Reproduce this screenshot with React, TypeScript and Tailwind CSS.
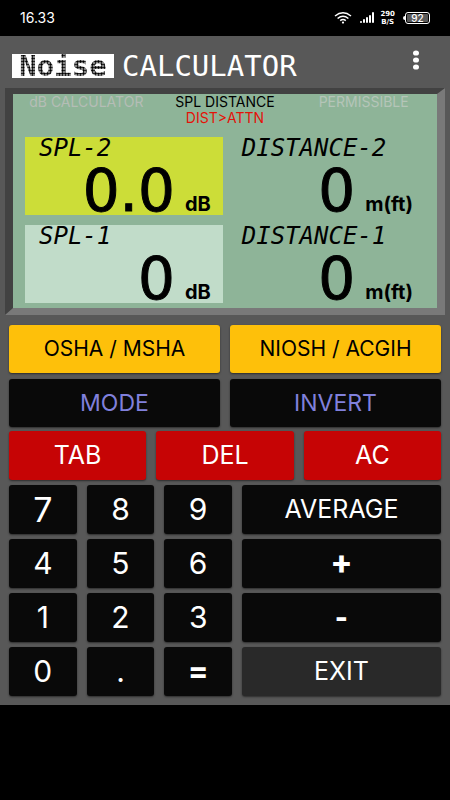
import type { ReactNode } from "react";

function StatusBar() {
  return (
    <div className="flex h-9 items-center justify-between bg-black pl-5 pr-5 text-white">
      <span className="text-sm">16.33</span>
      <div className="flex items-center">
        <svg className="mr-2 h-3 w-[18px]" viewBox="0 0 18 12" fill="none" stroke="currentColor" strokeWidth="1.5">
          <path d="M1 4Q9-2.4 17 4M3.600 6.500Q9 2 14.400 6.500M6.200 8.700Q9 6.400 11.800 8.700" />
          <circle cx="9" cy="10.600" r="1.100" fill="currentColor" stroke="none" />
        </svg>
        <svg className="mr-[6px] h-3 w-[14px]" viewBox="0 0 14 12" fill="currentColor">
          <rect x="0" y="9" width="2" height="2" rx="1" />
          <rect x="3" y="7" width="2" height="4" rx="1" />
          <rect x="6" y="5" width="2" height="6" rx="1" />
          <rect x="9" y="3" width="2" height="8" rx="1" />
          <rect x="12" y="0" width="2" height="11" rx="1" />
        </svg>
        <div className="mr-2 flex flex-col items-center font-['DejaVu_Sans',sans-serif] text-[7px] font-bold leading-[8px]">
          <span>290</span>
          <span>B/S</span>
        </div>
        <div className="flex items-center">
          <span className="h-1 w-[2px] rounded-l bg-white" />
          <div className="flex h-3 w-[25px] items-center justify-center rounded-[3px] border border-white p-px">
            <span className="flex h-full w-full items-center justify-center rounded-[1px] bg-[#5a5a5a] text-[10px] font-medium leading-none">
              92
            </span>
          </div>
        </div>
      </div>
    </div>
  );
}

function Header() {
  return (
    <header className="flex h-[52px] items-start justify-between pl-3 pr-[26px] pt-3">
      <h1 className="flex items-center gap-2 pt-[6px] font-['DejaVu_Sans_Mono',monospace] text-white">
        <span className="flex h-6 w-[102px] items-center justify-center bg-white text-[29px] font-bold leading-6">
          <span className="bg-[radial-gradient(circle,#000_40%,#aaa_75%)] bg-[length:3px_3px] bg-clip-text text-transparent">
            Noise
          </span>
        </span>
        <span className="text-[29px] leading-6">CALCULATOR</span>
      </h1>
      <button aria-label="More options" className="flex h-6 w-4 items-center justify-center">
        <svg className="h-5 w-[6px]" viewBox="0 0 6 20" fill="#fff">
          <ellipse cx="3" cy="3" rx="3" ry="2.600" />
          <ellipse cx="3" cy="10" rx="3" ry="2.600" />
          <ellipse cx="3" cy="17" rx="3" ry="2.600" />
        </svg>
      </button>
    </header>
  );
}

type ReadoutProps = {
  label: string;
  value: string;
  unit: string;
  className: string;
};

function Readout({ label, value, unit, className }: ReadoutProps) {
  return (
    <div className={`flex h-[78px] flex-col ${className}`}>
      <span className="font-['DejaVu_Sans_Mono',monospace] text-2xl italic leading-[22px]">{label}</span>
      <div className="flex items-baseline justify-end gap-[10px]">
        <output className="font-['DejaVu_Sans',sans-serif] text-[58px] leading-[64px] [-webkit-text-stroke:1px_#000]">
          {value}
        </output>
        <span className="text-xl font-bold leading-6">{unit}</span>
      </div>
    </div>
  );
}

function Display() {
  return (
    <section className="mx-[5px] border-b-[7px] border-l-8 border-r-8 border-t-[6px] border-b-[#797979] border-l-[#424242] border-r-[#797979] border-t-[#424242] bg-[#8eb498] pb-[5px] pl-3">
      <div className="-ml-3 grid grid-cols-3 px-1 text-center text-sm leading-4">
        <span className="text-[#b5bdb6]">dB CALCULATOR</span>
        <span className="text-black">SPL DISTANCE</span>
        <span className="text-[#b5c5b8]">PERMISSIBLE</span>
        <span className="col-start-2 text-[#e41208]">DIST&gt;ATTN</span>
      </div>
      <div className="mt-[11px] grid grid-cols-[12fr_13fr] gap-y-[10px]">
        <Readout label="SPL-2" value="0.0" unit="dB" className="bg-[#ccdd38] pl-[14px] pr-3" />
        <Readout label="DISTANCE-2" value="0" unit="m(ft)" className="pl-[19px] pr-6" />
        <Readout label="SPL-1" value="0" unit="dB" className="bg-[#c1dcc9] pl-[14px] pr-3" />
        <Readout label="DISTANCE-1" value="0" unit="m(ft)" className="pl-[19px] pr-6" />
      </div>
    </section>
  );
}

function Key({ children, className }: { children: ReactNode; className: string }) {
  return (
    <button className={`flex items-center justify-center rounded-[3px] shadow-[0_1px_2px_rgba(0,0,0,0.5)] ${className}`}>
      {children}
    </button>
  );
}

const amber = "h-12 bg-[#fec00a] text-[21px] text-black";
const mode = "h-12 bg-[#090909] text-[23px] text-[#8080dc]";
const red = "h-[49px] bg-[#c60405] text-[25px] text-white";
const digit = "h-[49px] bg-[#090909] text-[30px] text-white";
const wide = "h-[49px] bg-[#090909] text-[25px] text-white";
const sign = "h-[49px] bg-[#090909] font-['Roboto',sans-serif] text-[34px] font-bold text-white";

function Keypad() {
  return (
    <div className="px-[9px] pb-[9px] pt-[10px]">
      <div className="grid grid-cols-2 gap-x-[10px] gap-y-[6px]">
        <Key className={amber}>OSHA / MSHA</Key>
        <Key className={amber}>NIOSH / ACGIH</Key>
        <Key className={mode}>MODE</Key>
        <Key className={mode}>INVERT</Key>
      </div>
      <div className="mt-1 grid grid-cols-3 gap-[10px]">
        <Key className={red}>TAB</Key>
        <Key className={red}>DEL</Key>
        <Key className={red}>AC</Key>
      </div>
      <div className="mt-[5px] grid grid-cols-[68fr_68fr_68fr_200fr] gap-x-[10px] gap-y-[5px]">
        <Key className="h-[49px] bg-[#090909] text-[34px] text-white">7</Key>
        <Key className={digit}>8</Key>
        <Key className={digit}>9</Key>
        <Key className={wide}>AVERAGE</Key>
        <Key className={digit}>4</Key>
        <Key className={digit}>5</Key>
        <Key className={digit}>6</Key>
        <Key className={sign}>+</Key>
        <Key className={digit}>1</Key>
        <Key className={digit}>2</Key>
        <Key className={digit}>3</Key>
        <Key className={sign}>-</Key>
        <Key className={digit}>0</Key>
        <Key className={digit}>.</Key>
        <Key className={sign}>=</Key>
        <Key className="h-[49px] bg-[#292929] text-[25px] text-white">EXIT</Key>
      </div>
    </div>
  );
}

export default function App() {
  return (
    <div className="min-h-screen bg-black font-['Inter',sans-serif]">
      <StatusBar />
      <main className="bg-[#585858]">
        <Header />
        <Display />
        <Keypad />
      </main>
    </div>
  );
}
